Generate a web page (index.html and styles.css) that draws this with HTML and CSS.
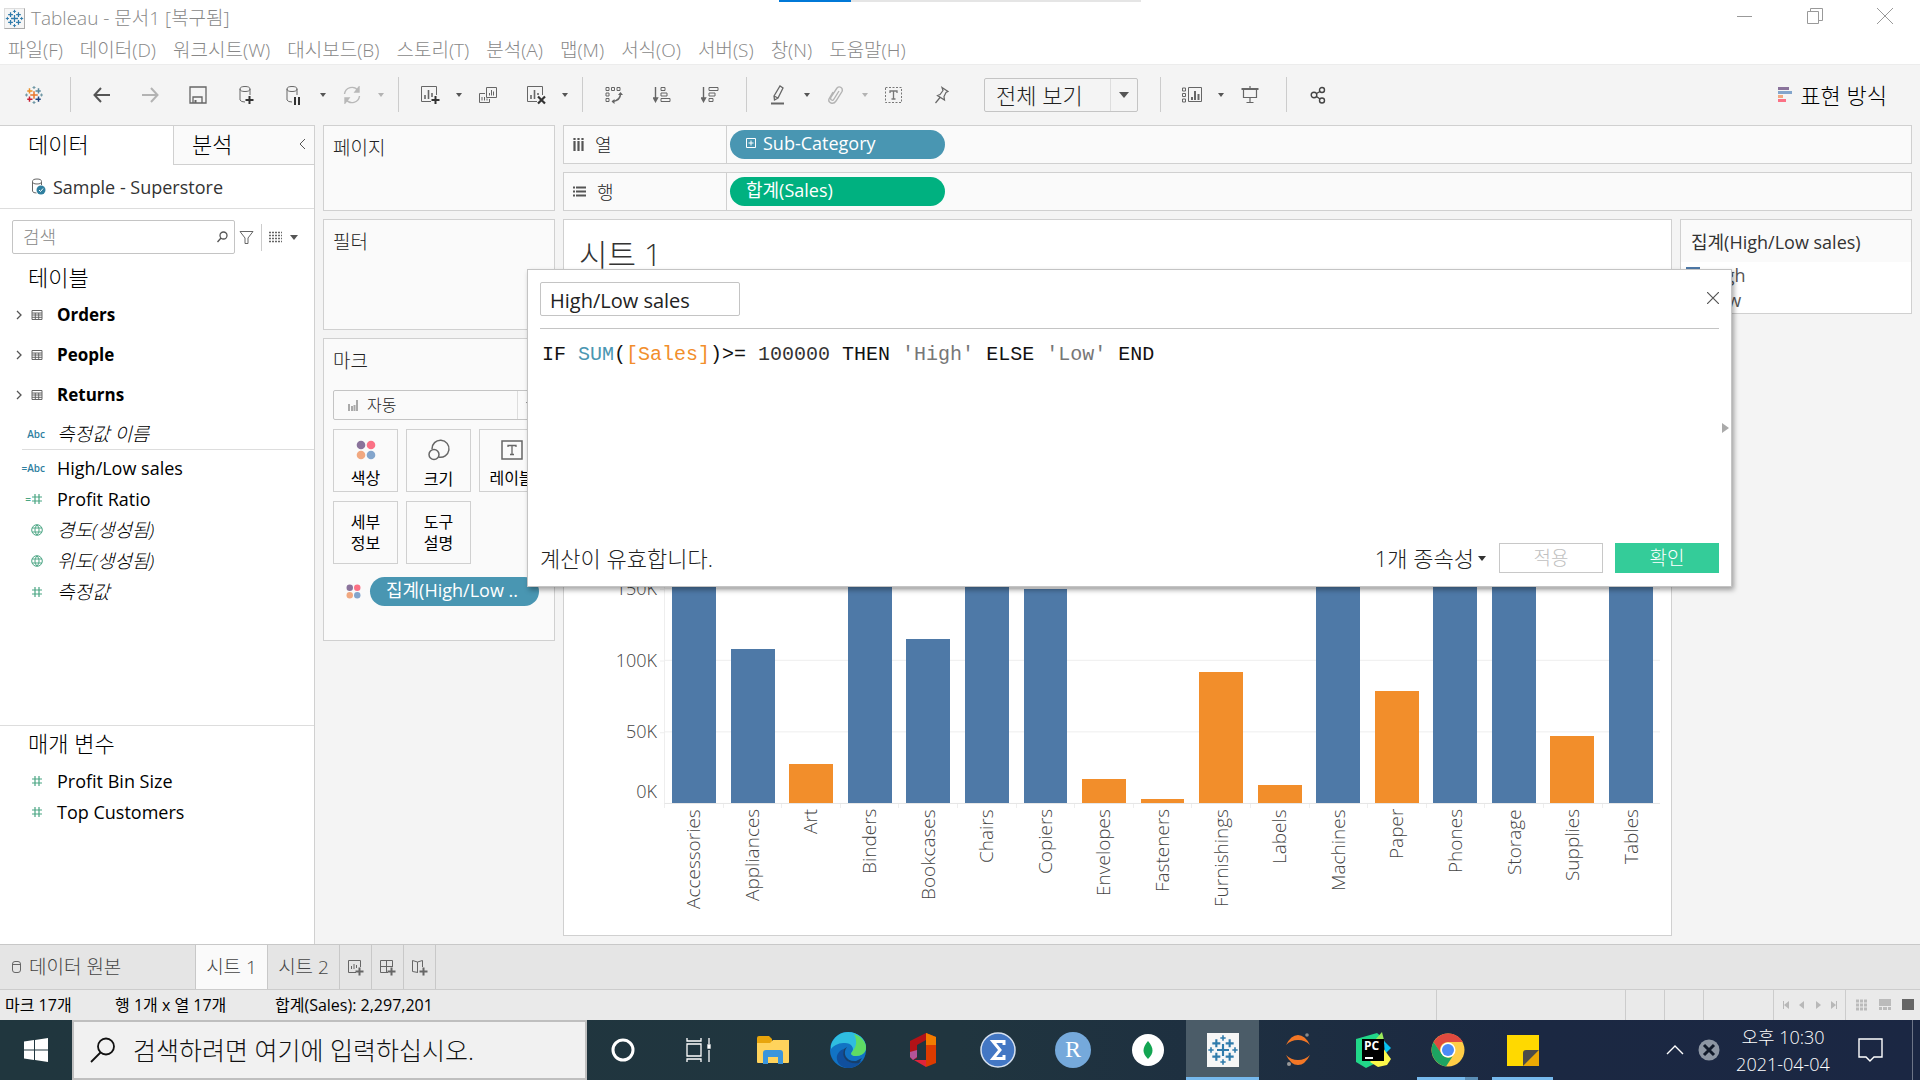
FILE: index.html
```html
<!DOCTYPE html>
<html lang="ko">
<head>
  <meta charset="UTF-8">
  <title>Tableau - 문서1 [복구됨]</title>
  <link rel="stylesheet" href="styles.css">
</head>
<body>
  <!-- shared icons -->
  <svg class="symbols" width="0" height="0">
    <symbol id="tableau" viewBox="0 0 24 24">
      <g fill="none" stroke="#2f7bab" stroke-width="1.6">
        <path d="M12 7.5v9M7.5 12h9"/>
        <path d="M7 4v6M4 7h6M17 4v6M14 7h6M7 14v6M4 17h6M17 14v6M14 17h6"/>
        <path stroke-width="1.2" d="M12 1v4M10 3h4M12 19v4M10 21h4M3 10v4M1 12h4M21 10v4M19 12h4"/>
      </g>
    </symbol>
    <symbol id="hash" viewBox="0 0 12 12"><path d="M4 1v10M8 1v10M1 4h10M1 8h10" fill="none" stroke="#4aa583" stroke-width="1.2"/></symbol>
    <symbol id="globe" viewBox="0 0 12 12"><path d="M6 .7a5.3 5.3 0 1 0 0 10.600a5.300 5.300 0 1 0 0-10.600zM1.200 4h9.600M1.200 8h9.600M6 1C3.300 3.500 3.300 8.500 6 11M6 1c2.700 2.500 2.700 7.500 0 10" fill="none" stroke="#4aa583"/></symbol>
    <symbol id="grid" viewBox="0 0 12 12"><path d="M1 1.500h10v9H1zM1 4h10M1 6h10M1 8.300h10M4.300 4v6.500M7.700 4v6.500" fill="none" stroke="#666"/></symbol>
    <symbol id="dots" viewBox="0 0 20 20"><circle cx="5" cy="5" r="4.300" fill="#8a739b"/><circle cx="15" cy="5" r="4.300" fill="#fb7185"/><circle cx="5" cy="15" r="4.300" fill="#f1a880"/><circle cx="15" cy="15" r="4.300" fill="#83a5cc"/></symbol>
  </svg>

  <header class="titlebar">
    <svg class="app-icon"><use href="#tableau"/></svg>
    <span class="app-title">Tableau - 문서1 [복구됨]</span>
    <div class="progress"><span></span></div>
    <div class="window-buttons">
      <button aria-label="최소화"><svg width="16" height="16"><path d="M0 8.500h15" stroke="#999"/></svg></button>
      <button aria-label="복원"><svg width="16" height="16" fill="none" stroke="#999"><path d="M.5 3.500h11v12H.500zM3.500 3V.500h12v12H12"/></svg></button>
      <button aria-label="닫기"><svg width="16" height="16"><path d="M0 0l16 16M16 0L0 16" stroke="#999"/></svg></button>
    </div>
  </header>

  <nav class="menubar">
    <button>파일(F)</button>
    <button>데이터(D)</button>
    <button>워크시트(W)</button>
    <button>대시보드(B)</button>
    <button>스토리(T)</button>
    <button>분석(A)</button>
    <button>맵(M)</button>
    <button>서식(O)</button>
    <button>서버(S)</button>
    <button>창(N)</button>
    <button>도움말(H)</button>
  </nav>

  <div class="toolbar">
    <button class="tool" aria-label="시작 페이지">
      <svg width="18" height="18" viewBox="0 0 24 24" fill="none" stroke-width="2">
        <path d="M12 7v10M7 12h10" stroke="#e8762c"/><path d="M6 3v7M3 6.500h7" stroke="#eb9129"/><path d="M18 3v7M14 6.500h7" stroke="#59879b"/>
        <path d="M6 14v7M3 17.500h7" stroke="#c72035"/><path d="M18 14v7M14 17.500h7" stroke="#1f447e"/>
        <path d="M12 0v4M10 2h4M12 20v4M10 22h4M2 10v4M0 12h4M22 10v4M20 12h4" stroke="#7199a6" stroke-width="1.500"/>
      </svg>
    </button>
    <span class="sep"></span>
    <button class="tool" aria-label="뒤로"><svg width="18" height="16" fill="none" stroke="#555" stroke-width="2"><path d="M17 8H2M8 1L1.500 8 8 15"/></svg></button>
    <button class="tool" aria-label="앞으로"><svg width="18" height="16" fill="none" stroke="#b3b3b3" stroke-width="2"><path d="M1 8h15M10 1l6.500 7L10 15"/></svg></button>
    <button class="tool" aria-label="저장"><svg width="18" height="18" fill="none" stroke="#666"><path stroke-width="1.300" d="M1 1h16v16H1zM4 17v-6h9v6"/><path d="M6.500 14v3" stroke-width="2"/></svg></button>
    <button class="tool" aria-label="새 데이터 원본"><svg width="18" height="20" fill="none" stroke="#666"><ellipse cx="8" cy="4" rx="5" ry="2.500"/><path d="M3 4v11q1 2 5 2M13 4v6"/><path stroke="#333" stroke-width="2" d="M12.500 11v8M8.500 15h8"/></svg></button>
    <button class="tool" aria-label="자동 업데이트 일시 중지"><svg width="18" height="20" fill="none" stroke="#666"><ellipse cx="7" cy="4" rx="5" ry="2.500"/><path d="M2 4v11q1 2 5 2M12 4v6"/><path stroke="#333" stroke-width="2" d="M10 12v8M14 12v8"/></svg></button>
    <button class="caret" aria-label="옵션"></button>
    <button class="tool" aria-label="새로 고침"><svg width="18" height="18" fill="none" stroke="#b8b8b8" stroke-width="1.400"><path d="M1.500 8A7.500 7.500 0 0 1 15 4.500M16.500 10A7.500 7.500 0 0 1 3 13.500"/><path fill="#b8b8b8" d="M16 1v5h-4zM2 17v-5h4z"/></svg></button>
    <button class="caret caret-off" aria-label="옵션"></button>
    <span class="sep"></span>
    <button class="tool" aria-label="새 워크시트"><svg width="20" height="20" fill="none" stroke="#666"><path d="M11 16.500H1.500v-15h15V10"/><path stroke-width="1.600" d="M5 14v-4M8.500 14V5M12 12V8"/><path stroke="#333" stroke-width="2" d="M15.500 11v8M11.500 15h8"/></svg></button>
    <button class="caret" aria-label="옵션"></button>
    <button class="tool" aria-label="복제"><svg width="18" height="18" fill="none" stroke="#666"><path d="M7.500 1.500h10v10h-10zM6 7.500H.500v9h10V13"/><path d="M10.500 9.500V7M12.500 9.500V4M14.500 9.500V5.500M3 14.500V11M5.500 14.500V11M8 14.500v-2"/></svg></button>
    <button class="tool" aria-label="시트 지우기"><svg width="20" height="20" fill="none" stroke="#666"><path d="M11 16.500H1.500v-15h15V10"/><path stroke-width="1.600" d="M5 14v-4M8.500 14V5M12 10V8"/><path stroke="#333" stroke-width="2.200" d="M12 11.500l7 7M19 11.500l-7 7"/></svg></button>
    <button class="caret" aria-label="옵션"></button>
    <span class="sep"></span>
    <button class="tool" aria-label="행과 열 바꾸기"><svg width="18" height="18" fill="none" stroke="#666"><path d="M1 1.500h3v3H1zM6.500 1.500h3v3h-3zM12 1.500h3v3h-3zM1 7h3v3H1zM1 12.500h3v3H1z"/><path d="M15.500 7.500q0 7-8 8" stroke-width="1.500"/><path d="M13 9l2.500-3L18 9zM9.500 13v5L6.500 15.500z" fill="#666" stroke="none"/></svg></button>
    <button class="tool" aria-label="오름차순 정렬"><svg width="18" height="18" fill="none" stroke="#666"><path stroke-width="1.400" d="M2.500 1v14M.5 12l2 3.500 2-3.500z"/><path d="M8 1.500h4v3H8zM8 7h6v3H8zM8 12.500h9v3H8z"/></svg></button>
    <button class="tool" aria-label="내림차순 정렬"><svg width="18" height="18" fill="none" stroke="#666"><path stroke-width="1.400" d="M2.500 1v14M.5 12l2 3.500 2-3.500z"/><path d="M8 1.500h9v3H8zM8 7h6v3H8zM8 12.500h4v3H8z"/></svg></button>
    <span class="sep"></span>
    <button class="tool" aria-label="하이라이트"><svg width="16" height="20" fill="none" stroke="#666"><path stroke-width="1.300" d="M4 11l6-10 3 2-5 10-3.500 2zM4 11l4 2"/><path stroke-width="2" d="M1 18.500h13"/></svg></button>
    <button class="caret" aria-label="옵션"></button>
    <button class="tool" aria-label="그룹"><svg width="16" height="18" fill="none" stroke="#b3b3b3" stroke-width="1.400"><path d="M11 5L6 13q-1 2-2.500 1T3 11l6-9q2-2 4-.5t1 4L8 15q-2 3-5 2t-2-4l4-7"/></svg></button>
    <button class="caret caret-off" aria-label="옵션"></button>
    <button class="tool" aria-label="마크 레이블 표시"><svg width="18" height="18" fill="none" stroke="#777"><path stroke-dasharray="2 1.500" d="M.5 1.500h16v15H.5z"/><path stroke-width="1.300" d="M5 7V5h7v2M8.500 5v8M6.500 13h4"/></svg></button>
    <button class="tool" aria-label="고정"><svg width="16" height="18" fill="none" stroke="#666" stroke-width="1.200"><path d="M8 1.500l6 4-2 1-2 4 .500 3.500-7-4.500 2.500-1 3-4zM6 11.500L1.500 17"/></svg></button>
    <label class="select fit-select">
      <select aria-label="맞춤"><option>전체 보기</option><option>표준</option></select>
    </label>
    <span class="sep"></span>
    <button class="tool" aria-label="카드 표시"><svg width="20" height="18" fill="none" stroke="#666"><path d="M.5 2h3v3h-3zM.5 7.500h3v3h-3zM.5 13h3v3h-3zM6.500 1.500h13v14h-13z"/><path stroke-width="2" d="M10 14v-3M13 14V5M16.500 14V8"/></svg></button>
    <button class="caret" aria-label="옵션"></button>
    <button class="tool" aria-label="프레젠테이션 모드"><svg width="18" height="18" fill="none" stroke="#666"><path stroke-width="2" d="M.5 3h17"/><path d="M2.500 4v7.500h13V4M9 0v2M9 12v5M5.500 16.500h7" stroke-width="1.200"/></svg></button>
    <span class="sep"></span>
    <button class="tool" aria-label="공유"><svg width="16" height="18" fill="none" stroke="#444" stroke-width="1.400"><circle cx="4" cy="9" r="2.800"/><circle cx="12" cy="4" r="2.500"/><circle cx="12" cy="14.500" r="2.500"/><path d="M6.500 7.500L10 5.500M6.500 10.500l3.500 2.500"/></svg></button>
    <button class="show-me"><svg width="15" height="16"><path d="M0 0h11v3H0z" fill="#8a739b"/><path d="M0 4h14v3H0z" fill="#83a5cc"/><path d="M0 8h5v3H0z" fill="#f1a880"/><path d="M0 12h8v3H0z" fill="#fb7185"/></svg>표현 방식</button>
  </div>

  <main class="workspace">
    <aside class="data-pane">
      <div class="pane-tabs">
        <button class="pane-tab active">데이터</button>
        <button class="pane-tab">분석<svg width="7" height="12" fill="none" stroke="#555"><path d="M6 1L1 6l5 5"/></svg></button>
      </div>
      <div class="source">
        <svg width="15" height="18" fill="none" stroke="#666"><ellipse cx="6" cy="3.500" rx="4.500" ry="2.500"/><path d="M1.500 3.500V13q0 2 4 2M10.500 4v3"/><circle cx="10" cy="12" r="4.500" fill="#2f7f9f" stroke="none"/><path stroke="#fff" d="M8 12l1.500 1.500L12 10.500"/></svg>
        Sample - Superstore
      </div>
      <div class="search-row">
        <div class="field-search">
          <input type="text" placeholder="검색" aria-label="검색">
          <svg width="11" height="12" fill="none" stroke="#555" stroke-width="1.300"><circle cx="6.500" cy="4.500" r="3.500"/><path d="M4 7L.5 11"/></svg>
        </div>
        <svg width="15" height="15" fill="none" stroke="#666"><path d="M1 1.500h13L9 8v5.500H6V8z"/></svg>
        <span class="thin-sep"></span>
        <svg width="13" height="12" stroke="#666" stroke-width="1.400"><path stroke-dasharray="2 1" d="M0 1.500h13M0 4.500h13M0 7.500h13M0 10.500h13"/></svg>
        <button class="caret" aria-label="보기 옵션"></button>
      </div>
      <h2>테이블</h2>
      <ul class="tables">
        <li><svg width="6" height="10" fill="none" stroke="#555" stroke-width="1.300"><path d="M1 1l4 4-4 4"/></svg><svg width="12" height="12"><use href="#grid"/></svg>Orders</li>
        <li><svg width="6" height="10" fill="none" stroke="#555" stroke-width="1.300"><path d="M1 1l4 4-4 4"/></svg><svg width="12" height="12"><use href="#grid"/></svg>People</li>
        <li><svg width="6" height="10" fill="none" stroke="#555" stroke-width="1.300"><path d="M1 1l4 4-4 4"/></svg><svg width="12" height="12"><use href="#grid"/></svg>Returns</li>
      </ul>
      <ul class="fields dimensions">
        <li class="generated"><span class="type abc">Abc</span>측정값 이름</li>
      </ul>
      <ul class="fields measures">
        <li><span class="type abc">=Abc</span>High/Low sales</li>
        <li><span class="type calc">=<svg width="12" height="12"><use href="#hash"/></svg></span>Profit Ratio</li>
        <li class="generated"><span class="type"><svg width="12" height="12"><use href="#globe"/></svg></span>경도(생성됨)</li>
        <li class="generated"><span class="type"><svg width="12" height="12"><use href="#globe"/></svg></span>위도(생성됨)</li>
        <li class="generated"><span class="type"><svg width="12" height="12"><use href="#hash"/></svg></span>측정값</li>
      </ul>
      <section class="parameters">
        <h2>매개 변수</h2>
        <ul class="fields">
          <li><span class="type"><svg width="12" height="12"><use href="#hash"/></svg></span>Profit Bin Size</li>
          <li><span class="type"><svg width="12" height="12"><use href="#hash"/></svg></span>Top Customers</li>
        </ul>
      </section>
    </aside>

    <div class="cards">
      <section class="card pages"><h3>페이지</h3></section>
      <section class="card filters"><h3>필터</h3></section>
      <section class="card marks">
        <h3>마크</h3>
        <label class="select mark-type">
          <svg width="10" height="12" stroke="#aaa" stroke-width="2"><path d="M1 12V5M4 12V7M6.500 12V6M9 12V1"/></svg>
          <select aria-label="마크 유형"><option>자동</option></select>
        </label>
        <div class="mark-buttons">
          <button><svg width="20" height="20"><use href="#dots"/></svg>색상</button>
          <button><svg width="24" height="22" fill="none" stroke="#666" stroke-width="1.500"><path d="M5 10a8.500 8.500 0 1 1 6.500 8"/><circle cx="7" cy="15.500" r="5"/></svg>크기</button>
          <button><svg width="22" height="20" fill="none" stroke="#666" stroke-width="1.500"><path d="M1 1h20v18H1z"/><path d="M7 7V5.500h8V7M11 5.500v9M9 14.500h4" stroke-width="1.300"/></svg>레이블</button>
          <button>세부<br>정보</button>
          <button>도구<br>설명</button>
        </div>
        <div class="mark-pill">
          <svg width="15" height="15"><use href="#dots"/></svg>
          <span class="pill blue">집계(High/Low ..</span>
        </div>
      </section>
    </div>

    <div class="view">
      <div class="shelf">
        <div class="shelf-name"><svg width="11" height="13" stroke="#555" stroke-width="2.200"><path d="M1.500 0v2M5.500 0v2M9.500 0v2M1.500 3v10M5.500 3v10M9.500 3v10"/></svg>열</div>
        <span class="pill blue"><svg width="10" height="10" fill="none" stroke="#fff"><path d="M.5.5h9v9h-9zM5 2.500v5M2.500 5h5"/></svg>Sub-Category</span>
      </div>
      <div class="shelf">
        <div class="shelf-name"><svg width="13" height="11" stroke="#555" stroke-width="2.200"><path d="M0 1.500h2M0 5.500h2M0 9.500h2M3 1.500h10M3 5.500h10M3 9.500h10"/></svg>행</div>
        <span class="pill green">합계(Sales)</span>
      </div>
      <div class="view-body">
        <section class="sheet">
          <h1>시트 1</h1>
          <div class="chart">
            <!-- one cell per 50K, labels above 150K are left out -->
            <div class="y-axis">
              <div></div>
              <div></div>
              <div></div>
              <div></div>
              <div>150K</div>
              <div>100K</div>
              <div><span>50K</span><span class="zero">0K</span></div>
            </div>
            <div class="plot">
              <div><span class="bar" style="height: 47.82%"></span></div>
              <div><span class="bar" style="height: 30.72%"></span></div>
              <div><span class="bar low" style="height: 7.75%"></span></div>
              <div><span class="bar" style="height: 58.12%"></span></div>
              <div><span class="bar" style="height: 32.82%"></span></div>
              <div><span class="bar" style="height: 93.84%"></span></div>
              <div><span class="bar" style="height: 42.72%"></span></div>
              <div><span class="bar low" style="height: 4.71%"></span></div>
              <div><span class="bar low" style="height: 0.86%"></span></div>
              <div><span class="bar low" style="height: 26.20%"></span></div>
              <div><span class="bar low" style="height: 3.57%"></span></div>
              <div><span class="bar" style="height: 54.07%"></span></div>
              <div><span class="bar low" style="height: 22.42%"></span></div>
              <div><span class="bar" style="height: 94.29%"></span></div>
              <div><span class="bar" style="height: 63.96%"></span></div>
              <div><span class="bar low" style="height: 13.34%"></span></div>
              <div><span class="bar" style="height: 59.13%"></span></div>
            </div>
          </div>
          <div class="x-axis">
            <div><span>Accessories</span></div>
            <div><span>Appliances</span></div>
            <div><span>Art</span></div>
            <div><span>Binders</span></div>
            <div><span>Bookcases</span></div>
            <div><span>Chairs</span></div>
            <div><span>Copiers</span></div>
            <div><span>Envelopes</span></div>
            <div><span>Fasteners</span></div>
            <div><span>Furnishings</span></div>
            <div><span>Labels</span></div>
            <div><span>Machines</span></div>
            <div><span>Paper</span></div>
            <div><span>Phones</span></div>
            <div><span>Storage</span></div>
            <div><span>Supplies</span></div>
            <div><span>Tables</span></div>
          </div>
        </section>
        <aside class="legend">
          <h3>집계(High/Low sales)</h3>
          <ul>
            <li><span class="swatch"></span>High</li>
            <li><span class="swatch low"></span>Low</li>
          </ul>
        </aside>
      </div>
    </div>
  </main>

  <div class="sheet-tabs">
    <button class="source-tab"><svg width="10" height="14" fill="none" stroke="#666"><rect x=".5" y="1.500" width="8" height="11" rx="2.500"/><path d="M.5 4.500h8"/></svg>데이터 원본</button>
    <button class="active">시트 1</button>
    <button>시트 2</button>
    <button class="new-tab" aria-label="새 워크시트"><svg width="17" height="17" fill="none" stroke="#666"><path d="M9 13.500H1.500v-12h12V8M4.500 10V7M7 10V5M9.500 9V6"/><path stroke-width="2" d="M12.500 8.500v8M8.500 12.500h8"/></svg></button>
    <button class="new-tab" aria-label="새 대시보드"><svg width="17" height="17" fill="none" stroke="#666"><path d="M9 13.500H1.500v-12h12V8M1.500 7.500h12M7.500 1.500v12"/><path stroke-width="2" d="M12.500 8.500v8M8.500 12.500h8"/></svg></button>
    <button class="new-tab" aria-label="새 스토리"><svg width="17" height="17" fill="none" stroke="#666"><path d="M7 13.500l-5.500-1V1.500l5 1.500 5-1.500V8M6.500 3v10"/><path stroke-width="2" d="M12.500 8.500v8M8.500 12.500h8"/></svg></button>
  </div>

  <footer class="status">
    <span class="status-marks">마크 17개</span>
    <span class="status-size">행 1개 x 열 17개</span>
    <span>합계(Sales): 2,297,201</span>
    <div class="status-cells">
      <span class="cell-wide"></span>
      <span class="cell"></span>
      <span class="cell"></span>
      <span class="cell-mid"></span>
      <span class="cell-nav">
        <svg width="8" height="10" fill="#b8b8b8"><path d="M1 1h1v8H1zM7 1v8L2 5z"/></svg>
        <svg width="8" height="10" fill="#b8b8b8"><path d="M6 1v8L1 5z"/></svg>
        <svg width="8" height="10" fill="#b8b8b8"><path d="M2 1v8l5-4z"/></svg>
        <svg width="8" height="10" fill="#b8b8b8"><path d="M7 1H6v8h1zM1 1v8l5-4z"/></svg>
      </span>
      <span class="cell-view">
        <svg width="12" height="12" stroke="#bbb" stroke-width="3"><path stroke-dasharray="3 1" d="M0 2h12M0 6h12M0 10h12"/></svg>
        <svg width="12" height="12" fill="#bbb"><path d="M0 0h12v7H0zM0 8h3v3H0zM4 8h4v3H4zM9 8h3v3H9z"/></svg>
        <svg width="12" height="12" fill="#666"><path d="M0 0h12v11H0z"/></svg>
      </span>
    </div>
  </footer>

  <div class="taskbar">
    <button class="start" aria-label="시작"><svg width="24" height="24" fill="#fff"><path d="M0 3.500L10 2v9.500H0zM11 2l13-2v11.500H11zM0 12.500h10V22L0 20.500zM11 12.500h13V24l-13-2z"/></svg></button>
    <label class="win-search">
      <svg width="26" height="26" fill="none" stroke="#111" stroke-width="1.800"><circle cx="16" cy="9.500" r="8"/><path d="M10.500 15.500L1 25"/></svg>
      <input type="text" placeholder="검색하려면 여기에 입력하십시오." aria-label="Windows 검색">
    </label>
    <div class="apps">
      <button aria-label="Cortana"><svg width="26" height="26"><circle cx="13" cy="13" r="10" fill="none" stroke="#fff" stroke-width="3"/></svg></button>
      <button aria-label="작업 보기"><svg width="26" height="26" fill="none" stroke="#fff" stroke-width="1.300"><path d="M2 7h14v12H2zM2 1v3h14V1M2 25v-3h14v3M24 1v6M24 13v12"/><path fill="#fff" d="M23 8h2v3h-2z"/></svg></button>
      <button aria-label="파일 탐색기"><svg width="34" height="30"><path d="M1 3q0-2 2-2h10l3 3v5H1z" fill="#e8a50c"/><path d="M1 8h13l3-3h16v22q0 1-1 1H2q-1 0-1-1z" fill="#ffd35c"/><path d="M7 29V18q0-3 3-3h14q3 0 3 3v11h-5v-7H12v7z" fill="#3a95dc"/></svg></button>
      <button aria-label="Edge"><svg width="36" height="36" viewBox="0 0 36 36"><circle cx="18" cy="18" r="18" fill="#1173c4"/><path d="M1 13C4 4 11 0 18 0c10 0 18 7 18 15 0 6-5 9-10 9-4 0-6-2-4-4 3-4-1-9-7-9-5 0-10 1-14 6z" fill="#2fbde0"/><path d="M24 2c8 3 12 8 12 14 0 5-5 8-10 8-4 0-6-2-4-4 4-5 6-10 2-18z" fill="#5fdc64"/><path d="M14 17c-2 8 4 16 13 13l5-1c-6 8-16 9-22 4-6-6-3-14 4-16z" fill="#104f9d"/><path d="M17 15c-5 6-1 15 9 14l6-3-3 5c-12 2-18-6-15-14z" fill="#173f6b"/></svg></button>
      <button aria-label="Office"><svg width="28" height="36"><path d="M1 9L17 1v7l-9 5v13l-4 2-3-3z" fill="#b31217"/><path d="M17 1l10 4v26l-10 4V28z" fill="#dc3b00"/><path d="M17 1l10 4v8H17z" fill="#f27c00"/><path d="M5 28h12v7z" fill="#e0243b"/><path d="M1 20l7-2v7l-4 3-3-3z" fill="#b25498"/></svg></button>
      <button aria-label="SPSS"><svg width="36" height="36" fill="none"><circle cx="18" cy="18" r="17" fill="#4377c4" stroke="#d5e0ef" stroke-width="1.500"/><path stroke="#fff" stroke-width="3" d="M24 13V9.500H13l7 8.500-7 8.500h11V23"/></svg></button>
      <button aria-label="R"><svg width="36" height="36"><circle cx="18" cy="18" r="18" fill="#75a9db"/><text x="18" y="25" text-anchor="middle" class="r-logo">R</text></svg></button>
      <button aria-label="MongoDB"><svg width="32" height="32"><circle cx="16" cy="16" r="16" fill="#fff"/><path d="M16 7c6 7 6 12 0 18-6-6-6-11 0-18z" fill="#13a552"/></svg></button>
      <button class="current" aria-label="Tableau"><svg class="tableau-tile" width="32" height="34"><use href="#tableau"/></svg></button>
      <button aria-label="Jupyter"><svg width="26" height="34"><path d="M1 12Q6 2 13 2t12 10Q20 7 13 7T1 12zM1 22q5 10 12 10t12-10q-5 5-12 5T1 22z" fill="#f37726"/><circle cx="22" cy="2" r="1.800" fill="#888"/><circle cx="4" cy="31" r="2" fill="#999"/></svg></button>
      <button aria-label="PyCharm"><svg width="36" height="36"><path d="M1 7L22 1l6 5-5 24-12 6-10-6z" fill="#21d789"/><path d="M27 0l3 12-10-4z" fill="#9bea5b"/><path d="M29 9l7 7-6 6z" fill="#07c3f2"/><path d="M28 16l8 11-4 6-9 2-8-5z" fill="#fcf84a"/><path d="M7 7h22v22H7z" fill="#000"/><text x="9" y="18" class="pc-logo">PC</text><path d="M10 25h8v2h-8z" fill="#fff"/></svg></button>
      <button class="open grouped" aria-label="Chrome"><svg width="34" height="34"><circle cx="17" cy="17" r="16.500" fill="#ffcd46"/><path d="M2.500 9A17 17 0 0 1 32 9H17a8 8 0 0 0-7.500 11z" fill="#e04a3f"/><path d="M2.500 9a17 17 0 0 0 12.500 24.500l6.500-10A8 8 0 0 1 10 20z" fill="#1da462"/><circle cx="17" cy="17" r="7.500" fill="#fff"/><circle cx="17" cy="17" r="6" fill="#4c8bf5"/></svg></button>
      <button class="open" aria-label="Sticky Notes"><svg width="32" height="32"><path d="M0 1h32v31H0z" fill="#ffd900"/><path d="M32 16v16H16z" fill="#eba904"/><path d="M32 16H19q-3 0-3 3v13z" fill="#4c4b49"/></svg></button>
    </div>
    <div class="tray">
      <button aria-label="숨겨진 아이콘"><svg width="18" height="10" fill="none" stroke="#fff" stroke-width="1.400"><path d="M1 9l8-8 8 8"/></svg></button>
      <button aria-label="알림 없음"><svg width="22" height="22"><circle cx="11" cy="11" r="10.500" fill="#8d96a3"/><path d="M6 6l10 10M16 6L6 16" stroke="#111a2a" stroke-width="3"/></svg></button>
      <div class="clock"><span>오후 10:30</span><span>2021-04-04</span></div>
      <button aria-label="알림 센터"><svg width="25" height="24" fill="none" stroke="#fff" stroke-width="1.400"><path d="M1 1h23v18h-8l-4 4-4-4H1z"/></svg></button>
      <span class="desktop-edge"></span>
    </div>
  </div>

  <!-- calculation editor -->
  <div class="calc-dialog" role="dialog" aria-label="계산 편집기">
    <div class="calc-head">
      <input type="text" value="High/Low sales" aria-label="계산 이름">
      <button class="calc-close" aria-label="닫기"><svg width="12" height="12"><path d="M0 0l12 12M12 0L0 12" stroke="#555" stroke-width="1.200"/></svg></button>
    </div>
    <div class="formula" contenteditable="true" spellcheck="false">IF <span class="fn">SUM</span>(<span class="field">[Sales]</span>)&gt;= <span class="num">100000</span> THEN <span class="str">'High'</span> ELSE <span class="str">'Low'</span> END</div>
    <div class="calc-foot">
      <span>계산이 유효합니다.</span>
      <button class="deps">1개 종속성<i class="deps-caret"></i></button>
      <button class="apply" disabled>적용</button>
      <button class="ok">확인</button>
    </div>
    <button class="expand" aria-label="함수 목록"></button>
  </div>
</body>
</html>
```
FILE: styles.css
```css
* { box-sizing: border-box; }
body {
  margin: 0;
  height: 100vh;
  display: flex;
  flex-direction: column;
  overflow: hidden;
  background: #f4f4f4;
  color: #222;
  font-family: "Open Sans", "Noto Sans CJK KR", sans-serif;
  font-size: 18px;
  font-weight: 300;
  line-height: 24px;
}
button, input, select { font: inherit; color: inherit; padding: 0; margin: 0; border: none; background: none; border-radius: 0; }
button { cursor: pointer; }
h1, h2, h3, ul { margin: 0; padding: 0; font-weight: inherit; font-size: inherit; list-style: none; }
svg { flex-shrink: 0; }
.symbols { position: absolute; }

/* title + menu */
.titlebar { height: 36px; flex-shrink: 0; display: flex; align-items: center; background: #fff; color: #888; padding-left: 4px; position: relative; font-size: 19px; }
.app-icon { width: 21px; height: 21px; background: #f6f6f6; border: 1px solid #ddd; border-right-color: #aaa; border-bottom-color: #aaa; }
.app-title { margin-left: 6px; }
.progress { position: absolute; top: 0; left: 779px; width: 362px; height: 2px; background: #e5e5e5; }
.progress span { display: block; width: 20%; height: 2px; background: #0078d7; }
.window-buttons { margin-left: auto; display: flex; align-self: flex-start; height: 32px; }
.window-buttons button { width: 70px; display: flex; align-items: center; justify-content: center; }
.menubar { height: 28px; flex-shrink: 0; display: flex; gap: 17px; padding-left: 8px; background: #fff; color: #888; font-size: 19px; }
.menubar button { height: 28px; }

/* toolbar */
.toolbar { height: 61px; flex-shrink: 0; display: flex; align-items: center; padding: 0 0 1px 10px; border-top: 1px solid #ececec; }
.tool { width: 48px; height: 32px; display: flex; align-items: center; justify-content: center; }
.sep { width: 1px; height: 35px; margin: 0 7px 0 12px; background: #ccc; }
.caret { width: 10px; height: 32px; display: flex; align-items: center; justify-content: center; }
.caret::before { content: ""; border: 3px solid transparent; border-top: 4px solid #555; border-bottom: none; }
.caret-off::before { border-top-color: #b3b3b3; }
.select { position: relative; display: flex; align-items: center; border: 1px solid #c4c4c4; border-radius: 2px; }
.select select { appearance: none; width: 100%; height: 100%; }
.select::before { content: ""; position: absolute; right: 26px; top: 0; bottom: 0; border-left: 1px solid #ddd; }
.select::after { content: ""; position: absolute; right: 8px; border: 5px solid transparent; border-top: 6px solid #555; border-bottom: none; pointer-events: none; }
.fit-select { width: 154px; height: 34px; margin: 0 10px 0 18px; font-size: 22px; }
.fit-select select { padding-left: 11px; }
.show-me { display: flex; align-items: center; gap: 7px; margin: 0 33px 0 auto; font-size: 22px; color: #000; }

/* workspace */
.workspace { flex: 1; min-height: 0; display: flex; gap: 8px; padding-right: 8px; }
.data-pane { width: 315px; display: flex; flex-direction: column; background: #fff; border: 1px solid #d0d0d0; border-left: none; border-bottom: none; color: #000; }
.data-pane h2 { height: 32px; padding-left: 28px; font-size: 22px; line-height: 28px; }
.pane-tabs { display: flex; height: 39px; flex-shrink: 0; font-size: 22px; }
.pane-tab { flex: 1; display: flex; align-items: center; justify-content: space-between; padding: 0 8px 3px 18px; background: #fafafa; border-left: 1px solid #d0d0d0; border-bottom: 1px solid #d0d0d0; text-align: left; }
.pane-tab.active { flex: none; width: 173px; padding-left: 28px; background: #fff; border: none; }
.source { display: flex; align-items: center; gap: 7px; height: 44px; flex-shrink: 0; padding-left: 31px; border-bottom: 1px solid #ddd; color: #333; font-weight: 400; }
.search-row { display: flex; align-items: center; padding: 11px 0 9px 12px; gap: 7px; }
.field-search { display: flex; align-items: center; width: 223px; height: 34px; padding: 0 6px 0 10px; border: 1px solid #c4c4c4; border-radius: 2px; margin-right: -3px; }
.field-search input { flex: 1; min-width: 0; outline: none; }
input::placeholder { color: #888; opacity: 1; }
.thin-sep { width: 1px; height: 27px; background: #ccc; }
.search-row .caret { width: 10px; }
.search-row .caret::before { border-width: 5px 4px 0; }
.tables li { display: flex; align-items: center; height: 40px; padding-left: 16px; font-size: 17px; font-weight: bold; }
.tables li svg:nth-child(2) { margin: 0 14px 0 9px; }
.fields li { display: flex; align-items: center; height: 31px; font-weight: 400; }
.fields .generated { font-style: italic; font-size: 19px; font-weight: 300; }
.type { width: 57px; padding-right: 14px; display: flex; justify-content: flex-end; align-items: center; font-style: normal; font-size: 10px; font-weight: 600; flex-shrink: 0; }
.abc { padding-right: 12px; color: #2f7f9f; }
.calc { color: #4aa583; }
.dimensions { padding-top: 3px; }
.measures { padding-top: 2px; border-top: 1px solid #ddd; margin-left: 22px; }
.measures li { margin-left: -22px; }
.parameters { margin-top: auto; height: 219px; border-top: 1px solid #ddd; }
.parameters h2 { height: 39px; line-height: 35px; }

/* cards */
.cards { width: 232px; display: flex; flex-direction: column; gap: 8px; }
.card { background: #fafafa; border: 1px solid #d0d0d0; padding: 10px 9px; }
.card h3 { font-size: 19px; }
.pages { height: 86px; }
.filters { height: 111px; }
.marks { height: 303px; }
.mark-type { height: 30px; margin-top: 17px; padding-left: 14px; font-size: 16px; }
.mark-type select { padding-left: 9px; }
.mark-buttons { display: grid; grid-template-columns: repeat(3, 65px); gap: 9px 8px; margin-top: 9px; }
.mark-buttons button { display: flex; flex-direction: column; align-items: center; justify-content: center; gap: 8px; height: 63px; border: 1px solid #d0d0d0; color: #000; font-size: 16px; font-weight: 400; line-height: 21px; }
.mark-buttons svg { margin-top: 7px; }
.mark-pill { display: flex; align-items: center; gap: 9px; padding: 13px 0 0 13px; }
.mark-pill .pill { width: 169px; flex-shrink: 0; }
.pill { display: flex; align-items: center; gap: 7px; width: 215px; height: 29px; padding: 0 16px 3px; border-radius: 15px; color: #fff; font-weight: 400; white-space: nowrap; }
.blue { background: #4996b2; }
.green { background: #00b180; }

/* view */
.view { flex: 1; min-width: 0; display: flex; flex-direction: column; gap: 8px; }
.shelf { display: flex; align-items: center; gap: 3px; height: 39px; flex-shrink: 0; background: #fafafa; border: 1px solid #d0d0d0; }
.shelf-name { display: flex; align-items: center; gap: 11px; width: 163px; height: 37px; padding-left: 9px; border-right: 1px solid #d0d0d0; }
.view-body { flex: 1; min-height: 0; display: flex; gap: 8px; align-items: flex-start; }
.sheet { flex: 1; min-width: 0; height: calc(100% - 8px); display: flex; flex-direction: column; background: #fff; border: 1px solid #d0d0d0; padding-right: 11px; color: #444; }
.sheet h1 { height: 82px; flex-shrink: 0; padding: 14px 0 0 15px; font-size: 31px; line-height: 40px; color: #333; }
.chart { flex: 1; min-height: 0; display: flex; }
.y-axis { width: 100px; display: flex; flex-direction: column; padding-right: 7px; text-align: right; background: linear-gradient(#eee 1px, transparent 1px) right top / 4px calc(100% / 7) repeat-y; }
.y-axis div { flex: 1; display: flex; flex-direction: column; justify-content: space-between; margin-top: -13px; margin-bottom: 13px; }
.y-axis .zero { margin-bottom: -12px; }
.plot { flex: 1; display: flex; border-left: 1px solid #eee; border-bottom: 1px solid #e6e6e6; background: linear-gradient(#eee 1px, transparent 1px) 0 0 / 100% calc(100% / 7); }
.plot div { flex: 1; display: flex; align-items: flex-end; justify-content: center; }
.bar { width: 75%; background: #4e79a7; }
.bar.low, .swatch.low { background: #f28e2b; }
.x-axis { display: flex; height: 131px; flex-shrink: 0; margin-left: 100px; font-size: 19px; }
.x-axis div { flex: 1; display: flex; justify-content: center; padding-top: 5px; background: linear-gradient(#eee, #eee) 0 0 / 1px 4px no-repeat; }
.x-axis span { writing-mode: vertical-rl; transform: rotate(180deg); text-align: right; }
.legend { width: 232px; background: #fff; border: 1px solid #d0d0d0; height: 95px; font-weight: 400; }
.legend h3 { height: 42px; padding: 10px 0 0 10px; background: #fafafa; color: #333; }
.legend li { display: flex; align-items: center; gap: 7px; height: 25px; padding-left: 5px; color: #555; }
.swatch { width: 14px; height: 16px; background: #4e79a7; }

/* sheet tabs + status */
.sheet-tabs { height: 46px; flex-shrink: 0; display: flex; background: #e5e5e5; border-top: 1px solid #c8c8c8; border-bottom: 1px solid #ccc; color: #444; font-size: 19px; }
.sheet-tabs button { width: 72px; display: flex; align-items: center; justify-content: center; border-right: 1px solid #c8c8c8; }
.sheet-tabs .source-tab { width: 196px; justify-content: flex-start; gap: 7px; padding-left: 12px; }
.sheet-tabs .active { background: #fafafa; }
.sheet-tabs .new-tab { width: 32px; }
.status { height: 30px; flex-shrink: 0; display: flex; align-items: center; padding-left: 5px; background: #eaeaea; color: #000; font-size: 16px; font-weight: 400; }
.status-marks { width: 110px; }
.status-size { width: 160px; }
.status-cells { margin-left: auto; display: flex; height: 30px; }
.status-cells > span { border-left: 1px solid #ccc; }
.cell-wide { width: 189px; }
.cell { width: 39px; }
.cell-mid { width: 70px; }
.cell-nav { width: 72px; display: flex; align-items: center; justify-content: center; gap: 8px; }
.cell-view { width: 75px; display: flex; align-items: center; justify-content: center; gap: 11px; padding-left: 3px; }

/* windows taskbar */
.taskbar { height: 60px; flex-shrink: 0; display: flex; background: linear-gradient(90deg, #20363e 0%, #20353f 50%, #1b2842 80%, #1b2743 100%); }
.start { width: 72px; display: flex; align-items: center; justify-content: center; }
.win-search { width: 515px; display: flex; align-items: center; gap: 17px; padding-left: 16px; background: #f1f1f1; border: 2px solid #bfbfbf; font-size: 25px; }
.win-search input { flex: 1; min-width: 0; height: 50px; outline: none; }
.win-search input::placeholder { color: #111; }
.apps { display: flex; margin-left: -2px; }
.apps button { width: 75px; display: flex; align-items: center; justify-content: center; border-bottom: 3px solid transparent; border-top: 3px solid transparent; }
.apps .current { width: 73px; margin: 0 1px; background: #4b5c68; border-bottom-color: #76b9ed; border-top-color: #4b5c68; }
.tableau-tile { background: #f6f6f6; }
.apps .open { width: 61px; margin: 0 7px; border-bottom-color: #76b9ed; }
.apps .grouped { border-image: linear-gradient(90deg, #76b9ed 79%, #5a8db5 79%) 0 0 3; }
.r-logo { font: 24px "Liberation Serif", serif; fill: #fff; }
.pc-logo { font: bold 12px "Open Sans", sans-serif; fill: #fff; }
.tray { margin-left: auto; display: flex; align-items: center; color: #fff; }
.tray button { display: flex; margin-right: 14px; }
.clock { display: flex; flex-direction: column; align-items: center; width: 98px; margin-right: 26px; padding-top: 2px; line-height: 27px; }
.desktop-edge { width: 8px; height: 60px; border-left: 1px solid #6d7587; margin-left: 15px; }

/* calculation editor, floats over the sheet */
.calc-dialog { position: absolute; left: 527px; top: 269px; width: 1205px; height: 318px; display: flex; flex-direction: column; padding: 12px 12px 13px; background: #fff; border: 1px solid #c4c4c4; box-shadow: 2px 3px 5px rgba(0, 0, 0, 0.35); font-size: 20px; }
.calc-head { display: flex; align-items: flex-start; height: 47px; border-bottom: 1px solid #c4c4c4; }
.calc-head input { width: 200px; height: 34px; padding: 2px 0 0 9px; border: 1px solid #c4c4c4; border-radius: 2px; font-weight: 400; }
.calc-close { margin: 10px 0 0 auto; display: flex; }
.formula { flex: 1; padding: 14px 2px; outline: none; font-family: "Liberation Mono", monospace; color: #111; }
.fn { color: #4996b2; }
.field { color: #f28e2b; }
.num { color: #333; }
.str { color: #777; }
.calc-foot { display: flex; align-items: center; gap: 12px; height: 30px; font-size: 22px; }
.deps { margin-left: auto; display: flex; align-items: center; gap: 4px; }
.deps-caret { border: 4px solid transparent; border-top: 5px solid #333; border-bottom: none; }
.apply, .ok { width: 104px; height: 30px; font-size: 19px; line-height: 26px; }
.apply { border: 1px solid #c8c8c8; color: #c0c0c0; margin-left: 1px; }
.ok { background: #34cc99; color: #fff; }
.expand { position: absolute; right: 2px; top: 153px; border: 5px solid transparent; border-left: 7px solid #aaa; border-right: none; }
```
